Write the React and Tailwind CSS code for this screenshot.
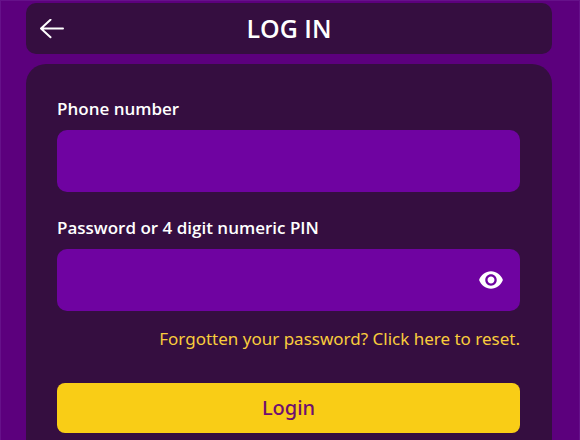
import { useState } from 'react';

const fieldClass = 'block w-full h-[62px] rounded-[10px] bg-[#6f03a1] pl-5 text-[17px] text-white focus:outline-none';
const labelClass = "block mb-[9px] font-['Open_Sans',sans-serif] text-[17px] leading-6 font-semibold text-white";

export default function App() {
    const [showPassword, setShowPassword] = useState(false);

    return (
        <div className="min-h-screen flex flex-col gap-2.5 border-x border-t border-[#66118a] bg-[#5c007d] pt-0.5 pl-[25px] pr-[27px] font-['Noto_Sans','Open_Sans',sans-serif]">
            {/* Title bar */}
            <header className="grid grid-cols-[1fr_auto_1fr] items-center h-[51px] rounded-[10px] bg-[#350e40] px-3.5 text-white">
                <button type="button" aria-label="Back" className="justify-self-start">
                    <svg width="24" height="20" viewBox="0 0 24 20" fill="none" stroke="currentColor" strokeWidth="2" strokeLinecap="round" strokeLinejoin="round">
                        <path d="M23 9.500H1M10.500 0.800L1 9.500l9.500 8.700" />
                    </svg>
                </button>
                <h1 className="font-['Open_Sans',sans-serif] text-[25px] font-semibold">LOG IN</h1>
            </header>

            {/* Login card */}
            <main className="flex-1 rounded-t-[20px] bg-[#350e40] pt-[33px] pb-1.5 pl-[31px] pr-8">
                <form onSubmit={(e) => e.preventDefault()}>
                    <div>
                        <label htmlFor="phone" className={labelClass}>Phone number</label>
                        <input id="phone" type="tel" className={`${fieldClass} pr-5`} />
                    </div>

                    <div className="mt-6">
                        <label htmlFor="password" className={labelClass}>Password or 4 digit numeric PIN</label>
                        <div className="relative">
                            <input id="password" type={showPassword ? 'text' : 'password'} className={`${fieldClass} pr-14`} />
                            <button
                                type="button"
                                aria-label="Show password"
                                onClick={() => setShowPassword(!showPassword)}
                                className="absolute right-4 inset-y-0 flex items-center text-white"
                            >
                                <svg width="26" height="26" viewBox="0 0 24 24" fill="currentColor">
                                    <path d="M12 4C7 4 2.730 7.300 1 12c1.730 4.700 6 8 11 8s9.270-3.300 11-8c-1.730-4.700-6-8-11-8zM12 17.300c-2.930 0-5.300-2.370-5.300-5.300s2.370-5.300 5.300-5.300 5.300 2.370 5.300 5.300-2.370 5.300-5.300 5.300zm0-8.500c-1.770 0-3.200 1.430-3.200 3.200s1.430 3.200 3.200 3.200 3.200-1.430 3.200-3.200-1.430-3.200-3.200-3.200z" />
                                </svg>
                            </button>
                        </div>
                    </div>

                    <div className="mt-4 text-right text-[17px] leading-6">
                        <a href="#reset" className="text-[#f9cc3c]">Forgotten your password? Click here to reset.</a>
                    </div>

                    <button type="submit" className="mt-8 w-full h-[50px] rounded-lg bg-[#f9cd16] text-xl font-medium text-[#6f1070]">
                        Login
                    </button>
                </form>
            </main>
        </div>
    );
}
